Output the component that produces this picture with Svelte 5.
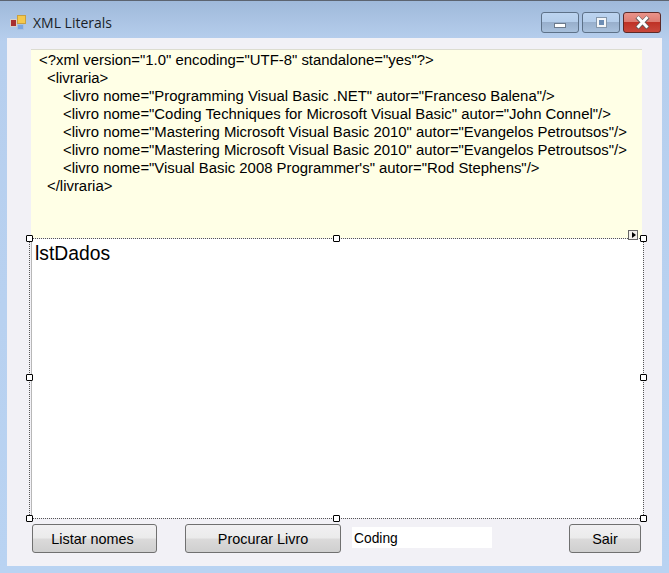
<script>
  const xmlLines = [
    { indent: 0, text: '<?xml version="1.0" encoding="UTF-8" standalone="yes"?>' },
    { indent: 1, text: '<livraria>' },
    { indent: 2, text: '<livro nome="Programming Visual Basic .NET" autor="Franceso Balena"/>' },
    { indent: 2, text: '<livro nome="Coding Techniques for Microsoft Visual Basic" autor="John Connel"/>' },
    { indent: 2, text: '<livro nome="Mastering Microsoft Visual Basic 2010" autor="Evangelos Petroutsos"/>' },
    { indent: 2, text: '<livro nome="Mastering Microsoft Visual Basic 2010" autor="Evangelos Petroutsos"/>' },
    { indent: 2, text: '<livro nome="Visual Basic 2008 Programmer\'s" autor="Rod Stephens"/>' },
    { indent: 1, text: '</livraria>' }
  ];

  // designer grab handles around the selected list box
  const handles = ['tl', 'tc', 'tr', 'ml', 'mr', 'bl', 'bc', 'br'];
</script>

<div class="window">
  <header class="titlebar">
    <svg class="app-icon" width="17" height="17" viewBox="0 0 17 17">
      <rect x="0.5" y="5.5" width="6" height="7" fill="#a83030" stroke="#d8d0c8" />
      <rect x="7.5" y="1.5" width="8" height="8" fill="#f4c84c" stroke="#c8a040" />
      <rect x="7.5" y="10.5" width="6" height="5" fill="#7aa6e0" stroke="#a8c0e0" />
    </svg>
    <span class="title">XML Literals</span>
    <div class="controls">
      <div class="ctl">
        <span class="min-glyph"></span>
      </div>
      <div class="ctl">
        <span class="max-glyph"></span>
      </div>
      <div class="ctl close">
        <svg width="17" height="15" viewBox="0 0 17 15">
          <path d="M3 2 L14 13 M14 2 L3 13" stroke="#5a5a5a" stroke-width="4.4" />
          <path d="M3.5 2 L13.5 12.5 M13.5 2 L3.5 12.5" stroke="#fff" stroke-width="3" />
        </svg>
      </div>
    </div>
  </header>

  <main class="client">
    <div class="xml-box">
      {#each xmlLines as line}
        <div class="xml-line indent-{line.indent}">{line.text}</div>
      {/each}
    </div>

    <div class="list-wrap">
      <div class="list-box">lstDados</div>
      {#each handles as h}
        <span class="handle {h}"></span>
      {/each}
      <span class="smart-tag"></span>
    </div>

    <div class="bottom">
      <button class="btn listar">Listar nomes</button>
      <button class="btn procurar">Procurar Livro</button>
      <input class="search" type="text" value="Coding" />
      <button class="btn sair">Sair</button>
    </div>
  </main>
</div>

<style>
  :global(body) {
    margin: 0;
    background: #b9d1ee;
  }

  .window {
    width: 669px;
    height: 573px;
    box-sizing: border-box;
    padding: 0 7px 7px 7px;
    display: flex;
    flex-direction: column;
    border-top: 1px solid #5c6470;
    background: linear-gradient(#9fb9da 0, #b7cfee 40px, #b9d3f2 100%);
    font-family: "Liberation Sans", Arial, sans-serif;
  }

  .titlebar {
    height: 37px;
    flex: none;
    display: flex;
    align-items: flex-start;
    color: #111;
  }

  .app-icon {
    margin: 13px 0 0 3px;
  }

  .title {
    margin: 12px 0 0 6px;
    font-family: "Open Sans", "Liberation Sans", sans-serif;
    font-size: 14px;
    line-height: 19px;
    color: #1a1f28;
  }

  .controls {
    margin: 11px 0 0 auto;
    padding-right: 1px;
    display: flex;
    gap: 3px;
  }

  .ctl {
    width: 38px;
    height: 21px;
    box-sizing: border-box;
    border: 1px solid #5d7188;
    border-radius: 3px;
    display: flex;
    align-items: center;
    justify-content: center;
    background: linear-gradient(#bcd4f0 0, #b4cdea 50%, #98afcc 50%, #a8c0dc 100%);
  }

  .close {
    border-color: #5c2a28;
    background: linear-gradient(#e9948a 0, #dc7a70 50%, #bf3226 50%, #c9483c 100%);
  }

  .min-glyph {
    width: 12px;
    height: 5px;
    margin-top: 5px;
    box-sizing: border-box;
    background: #fff;
    border: 1px solid #6c7a8c;
  }

  .max-glyph {
    width: 11px;
    height: 11px;
    box-sizing: border-box;
    background: #6d8db4;
    border: 3px solid #f4f6f8;
    outline: 1px solid #8496aa;
    outline-offset: -1px;
  }

  .client {
    flex: 1;
    min-height: 0;
    box-sizing: border-box;
    padding: 11px 0 0 24px;
    background: #f2f1f6;
    display: flex;
    flex-direction: column;
  }

  .xml-box {
    width: 611px;
    height: 189px;
    box-sizing: border-box;
    padding: 1px 0 0 8px;
    background: #ffffe6;
    border-top: 1px solid #dcdcd0;
    color: #000;
    font-size: 14.9px;
    line-height: 18px;
    white-space: pre;
  }

  .indent-1 {
    padding-left: 8px;
  }

  .indent-2 {
    padding-left: 24px;
  }

  .list-wrap {
    position: relative;
    width: 615px;
    height: 281px;
    margin-left: -2px;
    box-sizing: border-box;
    border: 1px dotted #555;
  }

  .list-box {
    height: 100%;
    margin-left: 1px;
    box-sizing: border-box;
    padding: 3px 0 0 3px;
    background: #fff;
    border-left: 1px solid #b8b8b8;
    color: #000;
    font-size: 19.3px;
    line-height: 24px;
  }

  .handle {
    position: absolute;
    width: 7px;
    height: 7px;
    box-sizing: border-box;
    background: #fff;
    border: 1px solid #000;
    border-radius: 1px;
  }

  .tl { left: -4px; top: -4px; }
  .tc { left: 303px; top: -4px; }
  .tr { right: -4px; top: -4px; }
  .ml { left: -4px; top: 135px; }
  .mr { right: -4px; top: 135px; }
  .bl { left: -4px; bottom: -4px; }
  .bc { left: 303px; bottom: -4px; }
  .br { right: -4px; bottom: -4px; }

  .smart-tag {
    position: absolute;
    right: 5px;
    top: -9px;
    width: 10px;
    height: 10px;
    box-sizing: border-box;
    background: #f2f0ec;
    border: 1px solid #666;
  }

  .smart-tag::after {
    content: '';
    position: absolute;
    left: 3px;
    top: 1px;
    border-left: 4px solid #000;
    border-top: 3px solid transparent;
    border-bottom: 3px solid transparent;
  }

  .bottom {
    display: flex;
    align-items: flex-start;
    margin-top: 5px;
    margin-left: 1px;
  }

  .btn {
    height: 29px;
    padding: 0;
    box-sizing: border-box;
    border: 1px solid #707070;
    border-radius: 3px;
    background: linear-gradient(#f1f0f2 0, #ebebeb 48%, #dbdada 52%, #cfcfcf 100%);
    color: #000;
    font-family: "Liberation Sans", Arial, sans-serif;
    font-size: 14.4px;
  }

  .listar {
    width: 125px;
    padding-right: 4px;
  }

  .procurar {
    width: 156px;
    margin-left: 28px;
  }

  .sair {
    width: 72px;
    margin-left: 77px;
  }

  .search {
    width: 140px;
    height: 21px;
    margin: 3px 0 0 11px;
    padding: 1px 0 0 2px;
    box-sizing: border-box;
    border: none;
    background: #fff;
    color: #000;
    font-family: "Liberation Sans", Arial, sans-serif;
    font-size: 13.8px;
  }
</style>
